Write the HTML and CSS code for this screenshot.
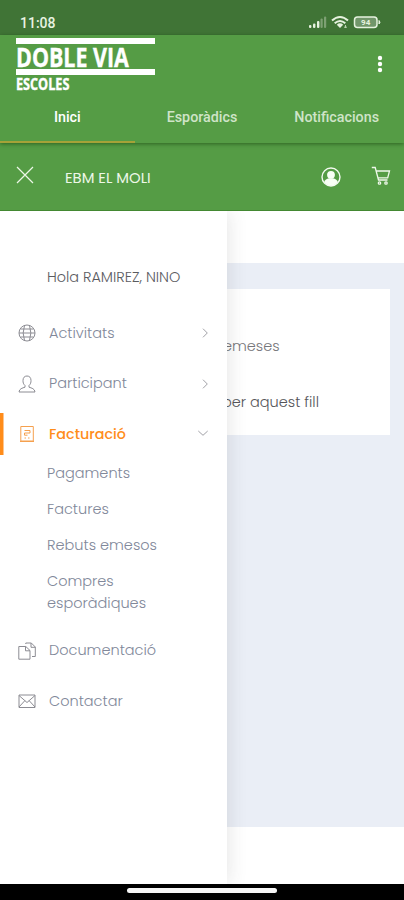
FILE: index.html
```html
<!DOCTYPE html>
<html lang="ca">
<head>
<meta charset="utf-8">
<title>Doble Via Escoles</title>
<meta name="viewport" content="width=device-width, initial-scale=1">
<link rel="stylesheet" href="styles.css">
</head>
<body>
<div class="status">
  <span class="time">11:08</span>
  <svg class="signals" width="76" height="18" viewBox="0 0 76 18">
    <g fill="#e6f2df"><rect x="3" y="11" width="2.4" height="3" rx="1"/><rect x="7" y="9.500" width="2.4" height="4.500" rx="1"/><rect x="11" y="7" width="2.4" height="7" rx="1"/></g>
    <g fill="#7da073"><rect x="14.500" y="4.500" width="2.2" height="9.500" rx="1"/><rect x="18" y="2.500" width="2.2" height="11.500" rx="1"/></g>
    <g fill="none" stroke="#e6f2df" stroke-width="2"><path d="M26 6.500Q34 -.5 42 6.500"/><path d="M28.700 9.200Q34 4.700 39.300 9.200"/></g>
    <path d="M30.800 10.700Q34 8 37.200 10.700L34 14Z" fill="#e6f2df"/><path d="M39.500 11v3M38 13.200h3" stroke="#b9d3ae"/>
    <rect x="48.500" y="3" width="22.500" height="10.500" rx="3" fill="#71966a" stroke="#e6f2df" stroke-width="1.500"/>
    <path d="M73 6.500q2 1.700 0 3.500z" fill="#e6f2df" stroke="#e6f2df"/>
    <text x="59.700" y="11.300" text-anchor="middle" class="battery">94</text>
  </svg>
</div>
<header class="appbar">
  <div class="brand-row">
    <div class="brand">
      <div class="brand-main"><span>DOBLE VIA</span></div>
      <div class="brand-sub"><span>ESCOLES</span></div>
    </div>
    <svg class="more" width="6" height="20" viewBox="0 0 6 20" fill="#fff"><circle cx="3" cy="4" r="2.200"/><circle cx="3" cy="10" r="2.200"/><circle cx="3" cy="16" r="2.200"/></svg>
  </div>
  <nav class="tabs"><a class="tab active">Inici</a><a class="tab">Esporàdics</a><a class="tab">Notificacions</a></nav>
</header>
<div class="toolbar">
  <svg class="close" width="18" height="18" viewBox="0 0 18 18" fill="none" stroke="#edf7e8" stroke-width="1.200"><path d="M1 1L17 17M17 1L1 17"/></svg>
  <span class="school">EBM EL MOLI</span>
  <svg class="user" width="20" height="20" viewBox="0 0 20 20"><circle cx="10" cy="10" r="9" fill="none" stroke="#f3faf0" stroke-width="1.400"/><circle cx="10" cy="7.800" r="3.900" fill="#f8fff5"/><path d="M3.200 15Q4.500 11.700 8 11.300h4Q15.500 11.700 16.800 15Q14 18.700 10 18.700T3.200 15Z" fill="#f8fff5"/></svg>
  <svg class="cart" width="20" height="20" viewBox="0 0 20 20" fill="none" stroke="#f0f8eb" stroke-width="1.300"><path d="M.8 1.500h3.400L7.500 14h9M5.200 5h13.300l-1.800 6.800H7"/><circle cx="8.500" cy="17" r="1.200"/><circle cx="15" cy="17" r="1.200"/></svg>
</div>
<main class="stage">
  <aside class="drawer">
    <div class="hello">Hola RAMIREZ, NINO</div>
    <ul class="menu first">
      <li class="item">
        <svg class="ico" viewBox="0 0 18 18"><circle cx="9" cy="9" r="8"/><path d="M6.500 1.500Q3.800 9 6.500 16.500M11.500 1.500Q14.200 9 11.500 16.500M1 9h16M2.500 5h13M2.500 13h13"/></svg>
        <span>Activitats</span><svg class="chev" viewBox="0 0 10 10"><path d="M3 .7L7.300 5 3 9.300"/></svg>
      </li>
      <li class="item">
        <svg class="ico" viewBox="0 0 18 18"><path d="M7 10.500C5.300 9 5 7.500 5 5.500 5 2.700 6.500 1 9 1s4 1.700 4 4.500c0 2-.3 3.500-2 5v1.700c2.500.8 5.800 1.500 6 4.800H1c.2-3.300 3.500-4 6-4.800Z"/></svg>
        <span>Participant</span><svg class="chev" viewBox="0 0 10 10"><path d="M3 .7L7.300 5 3 9.300"/></svg>
      </li>
      <li class="item current">
        <svg class="ico" viewBox="0 0 18 18"><path d="M2.800 1.500h12.500v14.500H2.800ZM2 16.500h14M6.500 5.500h5.500v2.500H6.500v2.200h3M6.500 13h1.500M10 13h1.500"/></svg>
        <span>Facturació</span><svg class="chev down" viewBox="0 0 10 10"><path d="M.3 3L5 7.300 9.700 3"/></svg>
      </li>
    </ul>
    <ul class="sub">
      <li>Pagaments</li><li>Factures</li><li>Rebuts emesos</li><li>Compres<br>esporàdiques</li>
    </ul>
    <ul class="menu last">
      <li class="item">
        <svg class="ico" viewBox="0 0 18 18"><path d="M.8 4.500h7L12 8.500v8.700H.8ZM7.500 4.500v4.300H12M7.800 2V1h5.500l4 4v9.500H14M13 1v4.300h4.300"/></svg>
        <span>Documentació</span>
      </li>
      <li class="item">
        <svg class="ico" viewBox="0 0 18 18"><path d="M1 3h16v12.500H1ZM1 3.500l8 7 8-7M1 15l5.800-6.300M17 15l-5.800-6.300"/></svg>
        <span>Contactar</span>
      </li>
    </ul>
  </aside>
  <section class="content">
    <div class="panel">
      <div class="card"><p class="emeses">emeses</p><p class="fill">per aquest fill</p></div>
    </div>
  </section>
</main>
<footer class="gesture"><i></i></footer>
</body>
</html>
```
FILE: styles.css
```css
* { box-sizing: border-box; }
body { margin: 0; width: 404px; height: 900px; overflow: hidden; display: flex; flex-direction: column; background: #fff; font-family: Poppins, Inter, sans-serif; }
ul, p { margin: 0; padding: 0; list-style: none; }
svg { display: block; flex: none; }

.status { height: 35px; flex: none; background: #407436; display: flex; justify-content: space-between; padding: 14px 22px 0 20px; color: #e8f3e2; font: 500 14px/18px Roboto, sans-serif; }
.battery { font: bold 8px Roboto, sans-serif; fill: #e6f2df; }

.appbar { height: 108px; flex: none; background: #559c45; display: flex; flex-direction: column; position: relative; box-shadow: 0 1px 4px rgba(20, 60, 10, .6); }
.brand-row { height: 57px; display: flex; justify-content: space-between; padding: 3px 21px 0 16px; }
.brand { width: 139px; color: #fff; font-family: "Open Sans", sans-serif; font-weight: 700; white-space: nowrap; }
.brand-main { height: 37px; border-top: 6px solid #fff; border-bottom: 6px solid #fff; font-size: 27.500px; line-height: 26px; }
.brand-sub { font-size: 16px; line-height: 18px; }
.brand-main span, .brand-sub span { display: inline-block; transform-origin: 0 50%; -webkit-text-stroke: .4px #fff; }
.brand-main span { transform: scaleX(.78); }
.brand-sub span { transform: scaleX(.79); }
.more { margin-top: 16px; }
.tabs { flex: 1; display: grid; grid-template-columns: repeat(3, 1fr); font: 500 14.300px/20px Roboto, sans-serif; color: #cfe4c8; text-align: center; }
.tab { padding-top: 15px; border-bottom: 2px solid transparent; }
.tab.active { color: #fff; border-color: #a5a238; }

.toolbar { height: 68px; flex: none; background: #559c45; border-bottom: 1px solid #438832; display: flex; align-items: center; padding: 0 13px 2px 16px; }
.close { margin-top: -2px; }
.school { margin: 5px auto 0 31px; color: #edf7e8; font-size: 14.800px; }
.user { margin: 3px 30px 0 0; }

.stage { flex: 1; display: flex; min-height: 0; }
.drawer { width: 227px; flex: none; background: #fff; position: relative; box-shadow: 2px 0 18px rgba(60, 60, 60, .12); clip-path: inset(0 -30px 0 0); padding-top: 55px; }
.hello { height: 42px; padding-left: 47px; font-size: 14.400px; line-height: 23px; color: #5b5b5f; font-weight: 300; white-space: nowrap; }
.item { height: 50.500px; display: flex; align-items: center; padding: 0 17px 0 18px; font-size: 14.500px; font-weight: 300; color: #81889a; white-space: nowrap; }
.last .item { padding-bottom: 2px; }
.ico { width: 18px; height: 18px; margin: 0 13px 0 0; fill: none; stroke: #8c8c93; stroke-width: 1; }
.chev { width: 10px; height: 10px; margin: 0 0 0 auto; fill: none; stroke: #a0a0a6; stroke-width: 1; }
.chev.down { margin: -2px 2px 0 auto; }
.item.current { color: #ff8c1a; font-weight: 500; font-size: 14.300px; background: linear-gradient(#ff8c1a, #ff8c1a) 0 4px / 3.500px 42px no-repeat; }
.current .ico { stroke: #f5a04e; }
.sub { padding: 2px 0 0 47px; font-size: 14.500px; line-height: 22px; font-weight: 300; color: #81889a; }
.sub li { height: 36px; }
.sub li:last-child { height: 57px; }

.content { flex: 1; padding: 52px 0 57px; }
.panel { height: 100%; background: #eaeef6; padding: 26px 14px 0 0; }
.card { height: 146px; background: #fff; padding-top: 46px; font-size: 14.500px; line-height: 22px; font-weight: 300; color: #77777b; overflow: hidden; }
.card p { margin-left: -4px; white-space: nowrap; }
.card .fill { margin: 34px 0 0 -5px; color: #555559; }

.gesture { height: 16px; flex: none; background: #000; display: flex; justify-content: center; padding-top: 4px; }
.gesture i { width: 150px; height: 5px; border-radius: 3px; background: #f6f6f6; margin-right: 1px; }
```
